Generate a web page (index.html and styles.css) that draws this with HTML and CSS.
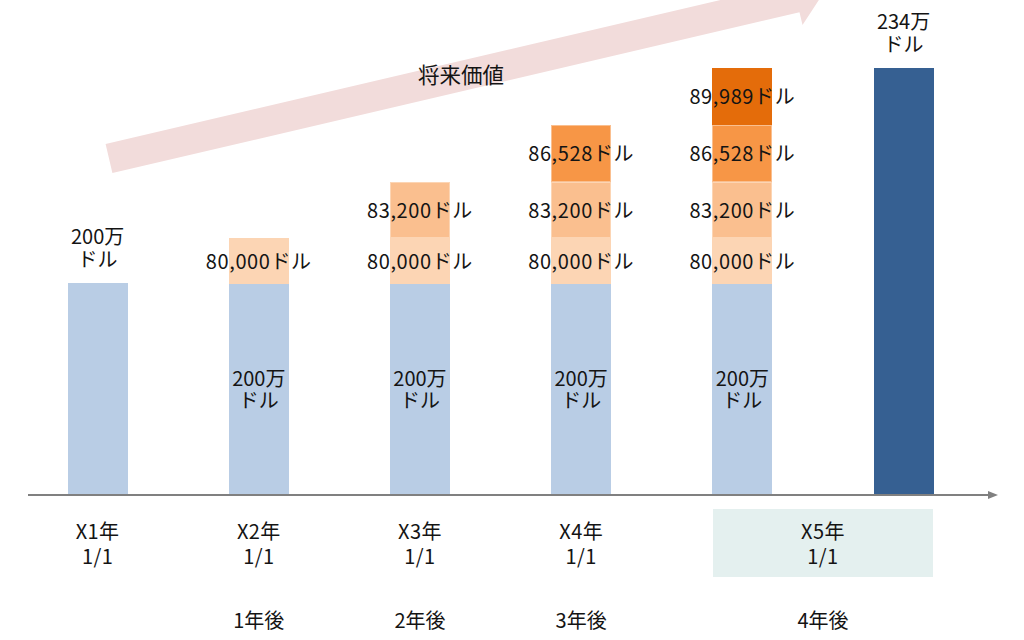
FILE: index.html
```html
<!DOCTYPE html>
<html lang="ja">
<head>
<meta charset="utf-8">
<title>将来価値</title>
<link rel="stylesheet" href="styles.css">
</head>
<body>
<div class="page">
  <svg class="arrow" width="1024" height="200" viewBox="0 0 1024 200" aria-hidden="true">
    <polygon points="105.6,143.9 792.7,-16.9 789.7,-29.6 824.7,-8.9 802.5,25 799.5,12.3 112.4,173.1" fill="#f2dcdb"/>
  </svg>
  <div class="arrow-label">将来価値</div>

  <div class="chart">
    <div class="col">
      <div class="cap">200万<br>ドル</div>
      <div class="bar">
        <div class="seg blue b1"></div>
      </div>
    </div>
    <div class="col">
      <div class="bar">
        <div class="seg o80">80,000ドル</div>
        <div class="seg blue">200万<br>ドル</div>
      </div>
    </div>
    <div class="col">
      <div class="bar">
        <div class="seg o83">83,200ドル</div>
        <div class="seg o80">80,000ドル</div>
        <div class="seg blue">200万<br>ドル</div>
      </div>
    </div>
    <div class="col">
      <div class="bar">
        <div class="seg o86">86,528ドル</div>
        <div class="seg o83">83,200ドル</div>
        <div class="seg o80">80,000ドル</div>
        <div class="seg blue">200万<br>ドル</div>
      </div>
    </div>
    <div class="col">
      <div class="bar">
        <div class="seg o89">89,989ドル</div>
        <div class="seg o86">86,528ドル</div>
        <div class="seg o83">83,200ドル</div>
        <div class="seg o80">80,000ドル</div>
        <div class="seg blue">200万<br>ドル</div>
      </div>
    </div>
    <div class="col">
      <div class="cap">234万<br>ドル</div>
      <div class="bar">
        <div class="seg dark"></div>
      </div>
    </div>
  </div>

  <div class="axis">
    <div class="axis-line"></div>
    <div class="axis-head"></div>
  </div>

  <div class="dates">
    <div class="cell"><div class="date">X1年<br>1/1</div></div>
    <div class="cell"><div class="date">X2年<br>1/1</div></div>
    <div class="cell"><div class="date">X3年<br>1/1</div></div>
    <div class="cell"><div class="date">X4年<br>1/1</div></div>
    <div class="cell wide"><div class="date hl">X5年<br>1/1</div></div>
  </div>

  <div class="years">
    <div class="cell"></div>
    <div class="cell">1年後</div>
    <div class="cell">2年後</div>
    <div class="cell">3年後</div>
    <div class="cell wide">4年後</div>
  </div>
</div>
</body>
</html>
```

FILE: styles.css
```css
* {
  box-sizing: border-box;
}

html, body {
  margin: 0;
  padding: 0;
  background: #ffffff;
}

.page {
  position: relative;
  width: 1024px;
  height: 640px;
  overflow: hidden;
  font-family: "Noto Sans CJK JP", "Noto Sans", sans-serif;
  font-size: 20px;
  color: #141414;
}

.arrow {
  position: absolute;
  left: 0;
  top: 0;
}

.arrow-label {
  position: absolute;
  left: 418px;
  top: 60px;
  font-size: 21.5px;
  line-height: 28px;
  white-space: nowrap;
}

.chart {
  position: relative;
  display: flex;
  align-items: flex-end;
  height: 494px;
  padding-left: 17px;
}

.col {
  width: 161.2px;
  display: flex;
  flex-direction: column;
  align-items: center;
}

.cap {
  text-align: center;
  line-height: 22.5px;
  margin-bottom: 13px;
  white-space: nowrap;
}

.bar {
  width: 60px;
  display: flex;
  flex-direction: column;
}

.seg {
  display: flex;
  align-items: center;
  justify-content: center;
  text-align: center;
  white-space: nowrap;
  line-height: 22.5px;
  overflow: visible;
}

.o80, .o83, .o86, .o89 {
  letter-spacing: 0.6px;
}

.blue {
  height: 210px;
  background: #b9cde5;
}

.b1 {
  height: 211px;
}

.dark {
  height: 426px;
  background: #366092;
}

.o80 {
  height: 46px;
  background: #fcd5b4;
}

.o83 {
  height: 56px;
  background: #fabf8f;
  border: 1px solid #fcd5b4;
}

.o86 {
  height: 57px;
  background: #f79646;
  border: 1px solid #fabf8f;
}

.o89 {
  height: 57px;
  background: #e46c0a;
}

.axis {
  display: flex;
  align-items: center;
  height: 2px;
  padding-left: 28px;
}

.axis-line {
  width: 960px;
  height: 2px;
  background: #808080;
}

.axis-head {
  width: 0;
  height: 0;
  border-left: 10px solid #808080;
  border-top: 4px solid transparent;
  border-bottom: 4px solid transparent;
}

.dates {
  display: flex;
  padding-left: 17px;
  margin-top: 13px;
}

.cell {
  width: 161.2px;
  display: flex;
  justify-content: center;
  text-align: center;
  white-space: nowrap;
}

.cell.wide {
  width: 322.4px;
}

.date {
  height: 68px;
  display: flex;
  align-items: center;
  justify-content: center;
  line-height: 25px;
  letter-spacing: 0.4px;
}

.date.hl {
  width: 220px;
  background: #e4f0ef;
}

.years {
  display: flex;
  padding-left: 17px;
  margin-top: 30px;
  line-height: 25px;
}
```
